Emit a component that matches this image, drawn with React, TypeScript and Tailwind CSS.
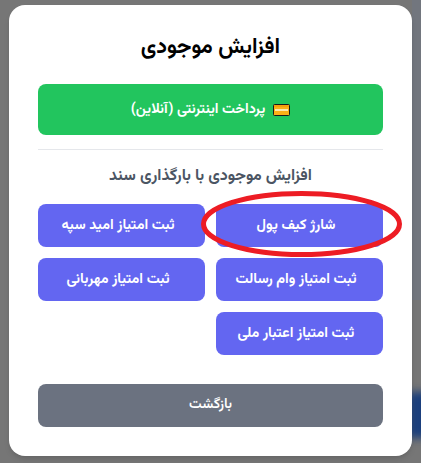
import React from 'react';

const docButtons = [
  'شارژ کیف پول',
  'ثبت امتیاز امید سپه',
  'ثبت امتیاز وام رسالت',
  'ثبت امتیاز مهربانی',
  'ثبت امتیاز اعتبار ملی',
];

// card emoji next to the online payment label
const CardIcon = () => (
  <svg width="17" height="12" viewBox="0 0 17 12" className="shrink-0">
    <rect x="0.5" y="0.5" width="16" height="11" rx="1" fill="#fbb017" stroke="#1a1a1a" />
    <rect x="1" y="1" width="15" height="2" fill="#f59e0b" />
    <rect x="2" y="5" width="13" height="2" fill="#fde9b0" />
  </svg>
);

export default function App() {
  return (
    <div className="relative h-[463px] w-[421px] overflow-hidden bg-[#767676] pt-[5px] pl-[9px] font-['Vazirmatn','Noto_Sans','DejaVu_Sans',sans-serif]">
      {/* blurred page behind the dialog */}
      <div className="absolute top-0 left-[412px] h-[300px] w-[9px] bg-[#72767e]" />
      <div className="absolute top-[392px] left-[408px] h-[46px] w-[30px] bg-[#1b3f7d] blur-[4px]" />

      <div dir="rtl" className="relative flex h-[451px] w-[403px] flex-col rounded-2xl bg-white px-[29px] pt-[29px] shadow-md">
        <h2 className="text-center text-[21.5px] leading-[28px] font-bold text-black">افزایش موجودی</h2>

        <button className="mt-[22px] flex h-[51px] w-full items-center justify-center gap-2 rounded-lg bg-[#22c55e] text-[14.2px] font-bold text-white">
          <CardIcon />
          <span>پرداخت اینترنتی (آنلاین)</span>
        </button>

        <div className="mt-[14px] h-px w-full bg-[#e5e7eb]" />

        <h3 className="mt-[15px] text-center text-[16px] leading-[24px] font-bold text-[#4b5563]">
          افزایش موجودی با بارگذاری سند
        </h3>

        <div className="mt-[15px] grid grid-cols-2 gap-[11px]">
          {docButtons.map((label) => (
            <button
              key={label}
              className="flex h-[43px] items-center justify-center rounded-lg bg-[#6366f1] ps-[7px] text-[14.3px] font-bold text-white"
            >
              {label}
            </button>
          ))}
        </div>

        <button className="mt-[29px] flex h-[43px] w-full items-center justify-center rounded-lg bg-[#6b7280] text-[14px] font-semibold text-white">
          بازگشت
        </button>
      </div>

      {/* red marker circled on top of the screenshot */}
      <svg width="204" height="68" viewBox="0 0 204 68" className="absolute top-[190px] left-[199px]">
        <ellipse cx="102.5" cy="34" rx="98" ry="30.5" fill="none" stroke="#ed1c24" strokeWidth="5" />
      </svg>
    </div>
  );
}
